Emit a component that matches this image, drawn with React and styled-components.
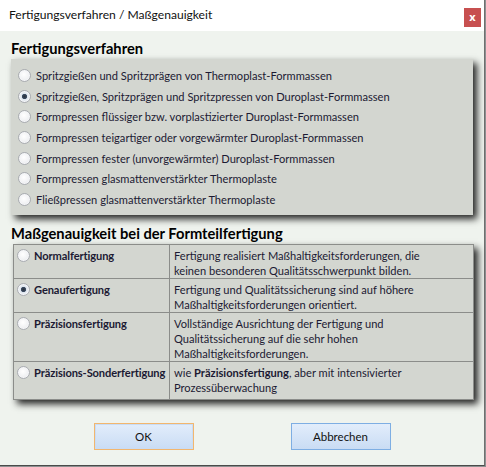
import React, { useState } from 'react';
import styled, { createGlobalStyle } from 'styled-components';

const GlobalStyle = createGlobalStyle`
	html, body {
		margin: 0;
		padding: 0;
		background: #8d9091;
	}
	* {
		box-sizing: border-box;
	}
`;

const verfahren = [
	'Spritzgießen und Spritzprägen von Thermoplast-Formmassen',
	'Spritzgießen, Spritzprägen und Spritzpressen von Duroplast-Formmassen',
	'Formpressen flüssiger bzw. vorplastizierter Duroplast-Formmassen',
	'Formpressen teigartiger oder vorgewärmter Duroplast-Formmassen',
	'Formpressen fester (unvorgewärmter) Duroplast-Formmassen',
	'Formpressen glasmattenverstärkter Thermoplaste',
	'Fließpressen glasmattenverstärkter Thermoplaste',
];

const genauigkeit = [
	{
		name: 'Normalfertigung',
		text: 'Fertigung realisiert Maßhaltigkeitsforderungen, die keinen besonderen Qualitätsschwerpunkt bilden.',
	},
	{
		name: 'Genaufertigung',
		text: 'Fertigung und Qualitätssicherung sind auf höhere Maßhaltigkeitsforderungen orientiert.',
	},
	{
		name: 'Präzisionsfertigung',
		text: 'Vollständige Ausrichtung der Fertigung und Qualitätssicherung auf die sehr hohen Maßhaltigkeitsforderungen.',
	},
	{
		name: 'Präzisions-Sonderfertigung',
		text: (
			<>
				wie <b>Präzisionsfertigung</b>, aber mit intensivierter Prozessüberwachung
			</>
		),
	},
];

const App = () => {
	const [verf, setVerf] = useState(1);
	const [gen, setGen] = useState(1);

	return (
		<>
			<GlobalStyle />
			<Window>
				<TitleBar>
					<Title>Fertigungsverfahren / Maßgenauigkeit</Title>
					<Close>x</Close>
				</TitleBar>
				<Body>
					<SectionTitle>Fertigungsverfahren</SectionTitle>
					<Group>
						{verfahren.map((label, i) => (
							<Option key={label} onClick={() => setVerf(i)}>
								<Radio checked={verf === i} />
								<span>{label}</span>
							</Option>
						))}
					</Group>
					<SectionTitle>Maßgenauigkeit bei der Formteilfertigung</SectionTitle>
					<Table>
						<colgroup>
							<col style={{ width: 156 }} />
							<col />
						</colgroup>
						<tbody>
							{genauigkeit.map((row, i) => (
								<tr key={row.name} onClick={() => setGen(i)}>
									<NameCell>
										<NameWrap>
											<Radio checked={gen === i} />
											<span>{row.name}</span>
										</NameWrap>
									</NameCell>
									<TextCell $last={i === genauigkeit.length - 1}>{row.text}</TextCell>
								</tr>
							))}
						</tbody>
					</Table>
					<Buttons>
						<Button $default>OK</Button>
						<Button>Abbrechen</Button>
					</Buttons>
				</Body>
			</Window>
		</>
	);
};

const Window = styled.div`
	width: 485px;
	height: 466px;
	background-color: #eff3ee;
	border-right: 1px solid #6f6f6f;
	border-bottom: 1px solid #4a4a4a;
	font-family: Lato, 'Noto Sans', sans-serif;
	font-size: 11.1px;
	color: #1c1a33;
	display: flex;
	flex-direction: column;
`;

const TitleBar = styled.div`
	display: flex;
	justify-content: space-between;
	align-items: flex-start;
	height: 31px;
	padding-left: 9px;
	background-color: #ffffff;
`;

const Title = styled.div`
	padding-top: 7px;
	font-size: 12.1px;
	color: #111;
`;

const Close = styled.div`
	display: flex;
	justify-content: center;
	align-items: center;
	margin: 8px 3px 0 0;
	width: 17px;
	height: 19px;
	background-color: #c75050;
	color: #fff;
	font-family: 'Noto Sans', sans-serif;
	font-weight: bold;
	font-size: 11px;
	line-height: 1;
	padding-bottom: 2px;
`;

const Body = styled.div`
	display: flex;
	flex-direction: column;
	padding: 0 11px;
`;

const SectionTitle = styled.div`
	padding: 8px 0 0 0;
	font-weight: bold;
	font-size: 14.7px;
	color: #000;
	line-height: 19px;
	margin-bottom: 1px;
`;

const Group = styled.div`
	display: flex;
	flex-direction: column;
	padding: 6px 0 5px 7px;
	margin-bottom: 1px;
	width: 462px;
	background-color: #d3d6d0;
	box-shadow: 4px 4px 7px rgba(0, 0, 0, 0.85);
`;

const Option = styled.div`
	display: flex;
	align-items: center;
	gap: 5px;
	height: 20.7px;
	white-space: nowrap;
	cursor: default;
`;

const Radio = styled.span`
	flex: none;
	width: 13px;
	height: 13px;
	border-radius: 50%;
	border: 1px solid #a9acb1;
	background: ${props =>
		props.checked
			? 'radial-gradient(circle, #29303a 0, #3a4a60 2.2px, #dfe6ee 3px, #f7f8fa 100%)'
			: 'radial-gradient(circle at 45% 40%, #ffffff 0, #f1f2f4 55%, #d9dbde 100%)'};
	box-shadow: inset 0 0 0 1px #f4f5f7;
`;

const Table = styled.table`
	margin: 0 0 0 2px;
	width: 461px;
	table-layout: fixed;
	border-collapse: collapse;
	background-color: #d3d6d0;
	box-shadow: 4px 4px 7px rgba(0, 0, 0, 0.85);
	line-height: 15px;
	border: 1px solid #8b8d8a;

	td {
		border: 1px solid #8b8d8a;
		vertical-align: top;
	}
`;

const NameCell = styled.td`
	padding: 3px 0 0 3px;
	font-weight: bold;
	white-space: nowrap;
	letter-spacing: -0.1px;
`;

const NameWrap = styled.div`
	display: flex;
	align-items: center;
	gap: 4px;
`;

const TextCell = styled.td`
	padding: 3px 26px ${props => (props.$last ? '4px' : '0')} 4px;
`;

const Buttons = styled.div`
	display: flex;
	justify-content: center;
	gap: 97px;
	margin-top: 23px;
`;

const Button = styled.button`
	width: 100px;
	height: 27px;
	font-family: Lato, 'Noto Sans', sans-serif;
	font-size: 11.5px;
	color: #111;
	background: linear-gradient(#e2edfb, #c9dcf4);
	border: 1px solid ${props => (props.$default ? '#f2b66e' : '#7eaee3')};
	box-shadow: ${props => (props.$default ? 'inset 0 0 0 1px #c9dcf4' : 'none')};
	border-radius: 0;
	padding: 0;
`;

export default App;
